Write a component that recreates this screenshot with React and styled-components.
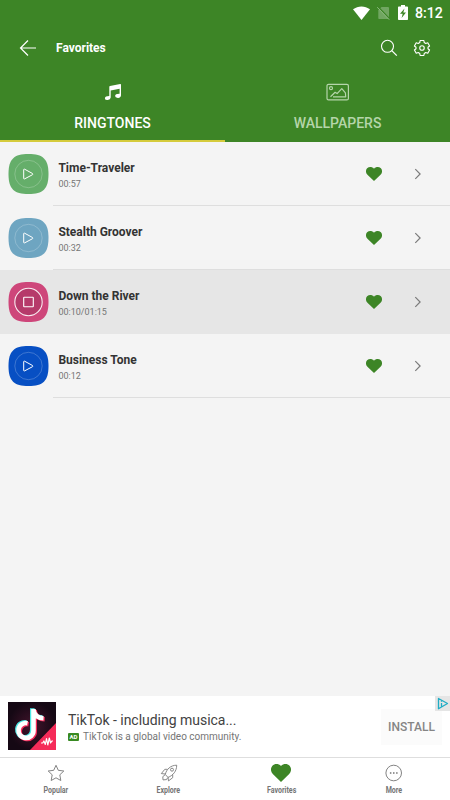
import React, {useState} from 'react'
import styled, { createGlobalStyle } from 'styled-components'


const GlobalStyle = createGlobalStyle`
  * {
    box-sizing: border-box;
  }

  body {
    margin: 0;
    background: #f4f4f4;
    font-family: Roboto, "Liberation Sans", sans-serif;
  }

  svg {
    display: block;
    flex: none;
  }

  button {
    border: 0;
    padding: 0;
    background: none;
    font: inherit;
    color: inherit;
  }
`

const Screen = styled.div`
  display: flex;
  flex-direction: column;
  width: 450px;
  height: 800px;
  overflow: hidden;
  background: #f4f4f4;
`

const Header = styled.header`
  flex: none;
  height: 142px;
  background: #3d8526;
  color: #fff;
`

const StatusBar = styled.div`
  display: flex;
  align-items: center;
  justify-content: flex-end;
  height: 25px;
  padding-right: 8px;

  .sim {
    margin-left: 7px;
  }

  .battery {
    margin-left: 8px;
  }
`

const Clock = styled.span`
  width: 27px;
  margin-left: 7px;
  padding-top: 1px;
  font-size: 14.2px;
  font-weight: 500;
  line-height: 25px;
  white-space: nowrap;
`

const AppBar = styled.div`
  display: flex;
  align-items: center;
  height: 46px;
  padding: 0 19px;
`

const Title = styled.h1`
  flex: 1;
  margin: 0 0 0 19px;
  font-size: 12px;
  font-weight: 700;
  line-height: 16px;
`

const Actions = styled.div`
  display: flex;
  gap: 15px;
`

const Tabs = styled.div`
  display: flex;
  height: 71px;
`

const Tab = styled.button`
  display: flex;
  flex: 1;
  flex-direction: column;
  align-items: center;
  height: 71px;
  padding-top: 11px;
  border-bottom: ${({$active}) => $active ? '2px solid #d5cb3c' : '0'};
  color: ${({$active}) => $active ? '#fff' : '#b5d5aa'};
`

const TabLabel = styled.span`
  margin-top: 12px;
  font-size: 14px;
  font-weight: 500;
  line-height: 18px;
`

const List = styled.main`
  flex: 1;
`

const Row = styled.div`
  display: flex;
  align-items: center;
  height: 64px;
  padding-left: 8px;
  background: ${({$playing}) => $playing ? '#e6e6e6' : 'linear-gradient(#dedede, #dedede) 53px 63px / 397px 1px no-repeat'};
`

const Info = styled.div`
  flex: 1;
  margin-left: 9.4px;
  padding-top: 3px;
`

const Name = styled.div`
  color: #333;
  font-size: 12px;
  font-weight: 700;
  line-height: 16px;
`

const Time = styled.div`
  margin-top: 1px;
  color: #757575;
  font-size: 9px;
  line-height: 14px;
`

const Like = styled.button`
  margin-right: 32px;
`

const Open = styled.button`
  margin-right: 28px;
`

const Ad = styled.aside`
  display: flex;
  position: relative;
  flex: none;
  height: 61px;
  padding: 6px 8px;
  background: #fff;
`

const AdText = styled.div`
  flex: 1;
  margin-left: 12px;
  padding-top: 9px;
`

const AdTitle = styled.div`
  color: #424242;
  font-size: 14px;
  line-height: 19px;
  letter-spacing: -0.02px;
  white-space: nowrap;
`

const AdLine = styled.div`
  display: flex;
  align-items: center;
  gap: 4px;
  color: #757575;
  font-size: 10px;
  line-height: 14px;
  white-space: nowrap;
`

const AdBadge = styled.span`
  width: 11px;
  height: 8px;
  border-radius: 1px;
  background: #388a22;
  color: #fff;
  font-size: 6px;
  font-weight: 700;
  line-height: 8px;
  text-align: center;
`

const Install = styled.button`
  width: 61px;
  height: 36px;
  margin-top: 7px;
  background: #fbfbfb;
  color: #858585;
  font-size: 12px;
  font-weight: 500;
`

const AdChoices = styled.div`
  position: absolute;
  top: 0;
  right: 0;
  width: 15px;
  height: 15px;
  background: #e5e5e5;
`

const BottomNav = styled.nav`
  display: flex;
  flex: none;
  height: 43px;
  border-top: 1px solid #dedede;
  background: #fff;
`

const NavItem = styled.button`
  display: flex;
  flex: 1;
  flex-direction: column;
  align-items: center;
  padding-top: 6px;
  color: #757575;
`

const NavLabel = styled.span`
  margin-top: 3px;
  font-size: 8.5px;
  font-weight: 700;
  line-height: 10px;
  transform: scaleX(0.83);
`


const Heart = ({width, height}) => (
  <svg width={width} height={height} viewBox="0 0 20 18" preserveAspectRatio="none" fill="#3d8526">
    <path d="M10 18 1.800 10C-.6 7.500-.6 3.800 1.400 1.700 3.700-.5 7.500-.5 10 2.100 12.500-.5 16.300-.5 18.600 1.700 20.600 3.800 20.600 7.500 18.200 10Z" />
  </svg>
)

const Cover = ({color, playing}) => (
  <svg width="41" height="40" viewBox="0 0 41 40" fill="none">
    <path d="M20.500 0C35 0 40.500 5 40.500 20S35 40 20.500 40 .5 35 .5 20 6 0 20.500 0Z" fill={color} />
    <circle cx="20.500" cy="20" r="13.700" fill={playing ? '#b63a6a' : 'none'} stroke="#fff" strokeOpacity={playing ? 0.9 : 0.28} strokeWidth={playing ? 1.1 : 0.8} />
    {playing
      ? <rect x="15.700" y="15.200" width="9.600" height="9.600" rx=".5" stroke="#fff" strokeWidth="1.100" />
      : <path d="M15.700 15.600v8.800q0 .9.900.5l7.900-4.200q.9-.6 0-1.200l-7.900-4.300q-.9-.4-.9.400Z" stroke="#fff" strokeWidth="1" />}
  </svg>
)

const WifiIcon = () => (
  <svg width="17" height="14" viewBox="0 0 18 14" preserveAspectRatio="none" fill="#fff">
    <path d="M0 3.300C5.200-.6 12.800-.6 18 3.300L9 14Z" />
  </svg>
)

const NoSimIcon = () => (
  <svg className="sim" width="13" height="14" viewBox="0 0 13 14">
    <path d="M4.500 1H11q1 0 1 1v10.500q0 .5-.5.5H2q-.7 0-.7-.7V4.200Z" fill="#71a661" />
    <path d="m.8.500 12 12.500" stroke="#3d8526" strokeWidth="1.200" />
    <path d="m.2 1.200 12 12.500" stroke="#8dba80" strokeWidth="1" />
  </svg>
)

const BatteryIcon = () => (
  <svg className="battery" width="10" height="15" viewBox="0 0 10 15">
    <path d="M3 0h4v1.500h2.200q.8 0 .8.800v11.900q0 .8-.8.800H.8q-.8 0-.8-.8V2.300q0-.8.8-.8H3Z" fill="#fff" />
    <path d="M6.500 3.500 2 8.700h2.700L3.600 13 8 7.600H5.300Z" fill="#3d8526" />
  </svg>
)

const BackIcon = () => (
  <svg width="18" height="17" viewBox="0 0 18 17" fill="none" stroke="#fff" strokeWidth="1.200">
    <path d="M17 8H1.500M9 .5 1.500 8 9 15.500" />
  </svg>
)

const SearchIcon = () => (
  <svg width="18" height="18" viewBox="0 0 18 18" fill="none" stroke="#fff" strokeWidth="1.100">
    <circle cx="7.500" cy="7.300" r="6" />
    <path d="m11.800 11.600 5 5" strokeWidth="1.300" />
  </svg>
)

const GearIcon = () => (
  <svg width="18" height="18" viewBox="0 0 24 24" fill="none" stroke="#fff" strokeWidth="1.500" strokeLinejoin="round">
    <path d="m9.500 2-.5 2.800-2 1.200-2.700-1L1.900 9.300 4 11v2l-2.100 1.700L4.300 19l2.700-1 2 1.200.5 2.800h5l.5-2.800 2-1.200 2.700 1 2.400-4.300L20 13v-2l2.100-1.700L19.700 5 17 6l-2-1.200-.5-2.800Z" />
    <circle cx="12" cy="12" r="3" />
  </svg>
)

const MusicIcon = () => (
  <svg width="18" height="20" viewBox="0 0 18 20" fill="#fff">
    <path d="M5.300 5Q5.300 4.300 6 4.100L16.200 2q.8-.1.800.7v10.500q0 2.300-2.900 2.700-3 .1-3-1.800.1-2.400 4.500-2.300V6.700L6.700 8.600v6.900q-.2 2.400-3 2.600-2.800.1-2.800-1.700.1-2.300 4.400-2.300Z" />
  </svg>
)

const PictureIcon = () => (
  <svg width="24" height="20" viewBox="0 0 24 20" fill="none" stroke="currentColor" strokeWidth="1.200" strokeLinejoin="round">
    <rect x="1" y="2.300" width="21.400" height="15.600" rx="1.500" />
    <circle cx="5" cy="6.200" r="1.500" />
    <path d="m4.500 14.800 4.600-4.500 2 1.300 4.700-5 3.600 4.200.3 4H7" />
  </svg>
)

const ChevronIcon = () => (
  <svg width="8" height="12" viewBox="0 0 8 12" fill="none" stroke="#7a7a7a" strokeWidth="1.200">
    <path d="m1.300 1.200 4.800 4.800-4.800 4.800" />
  </svg>
)

const TikTokIcon = () => (
  <svg width="48" height="48" viewBox="0 0 48 48" fill="none">
    <defs>
      <radialGradient id="glow">
        <stop offset="0" stopColor="#43142c" />
        <stop offset="1" stopColor="#150814" />
      </radialGradient>
      <path id="note" d="M25.500 7v21.500a7.500 7.500 0 1 1-6-7.300M25.500 8c.7 5 4.500 8 10 8.300" />
    </defs>
    <path d="M0 0h48v48H0Z" fill="url(#glow)" />
    <path d="M48 21v27H22Z" fill="#f52b59" />
    <g strokeWidth="4.600">
      <use href="#note" x="-1.200" y="-.7" stroke="#4de8e5" />
      <use href="#note" x="1.200" y="1" stroke="#f52b59" />
      <use href="#note" stroke="#fff" />
    </g>
    <path d="M33 41h1.700l1.200-2 1.400 3.500 1.200-6 1.300 6.500 1.500-7 1.300 5 1.200-2H45" stroke="#fff" strokeWidth="1.200" strokeLinejoin="round" />
  </svg>
)

const StarIcon = () => (
  <svg width="18" height="18" viewBox="0 0 18 18" fill="none" stroke="currentColor" strokeWidth=".9" strokeLinejoin="round">
    <path d="m9 1.300 2.300 5 5.500.7-4 3.800 1 5.700L9 13.800l-4.800 2.700 1-5.700-4-3.800 5.500-.7Z" />
  </svg>
)

const RocketIcon = () => (
  <svg width="18" height="18" viewBox="0 0 18 18" fill="none" stroke="currentColor" strokeWidth=".85" strokeLinejoin="round">
    <path d="M5.300 10.500C6.300 5.500 10.500 1.200 16.700 1.200c0 6-3.600 10.200-8.700 12.200Z" />
    <circle cx="12" cy="5.700" r="1.500" />
    <path d="M7.500 5.300H4.800L1.300 9.600l4.200.4M12.700 10.500v3.200l-4.200 3.200-.5-3.500M5 10.900l-2.200 1.700.2 3.300 3.500-.3 1.200-2" />
  </svg>
)

const MoreIcon = () => (
  <svg width="18" height="18" viewBox="0 0 18 18" fill="none" stroke="currentColor" strokeWidth=".9">
    <circle cx="8.700" cy="9" r="7.800" />
    <path d="M4.900 9h1.500m1.600 0h1.500m1.600 0h1.500" strokeWidth="1.400" />
  </svg>
)


const ringtones = [
  { name: 'Time-Traveler', time: '00:57', color: '#65ae6a' },
  { name: 'Stealth Groover', time: '00:32', color: '#6ea5c1' },
  { name: 'Down the River', time: '00:10/01:15', color: '#ce467a', playing: true },
  { name: 'Business Tone', time: '00:12', color: '#074fc3' },
]

const Ringtone = ({name, time, color, playing}) => {
  return (
    <Row $playing={playing}>
      <Cover color={color} playing={playing} />
      <Info>
        <Name>{name}</Name>
        <Time>{time}</Time>
      </Info>
      <Like><Heart width={16} height={14} /></Like>
      <Open><ChevronIcon /></Open>
    </Row>
  )
}


const App = () => {
  const [tab, setTab] = useState('ringtones')

  return (
    <>
      <GlobalStyle />
      <Screen>
        <Header>
          <StatusBar>
            <WifiIcon />
            <NoSimIcon />
            <BatteryIcon />
            <Clock>8:12</Clock>
          </StatusBar>
          <AppBar>
            <BackIcon />
            <Title>Favorites</Title>
            <Actions>
              <SearchIcon />
              <GearIcon />
            </Actions>
          </AppBar>
          <Tabs>
            <Tab $active={tab === 'ringtones'} onClick={() => setTab('ringtones')}>
              <MusicIcon />
              <TabLabel>RINGTONES</TabLabel>
            </Tab>
            <Tab $active={tab === 'wallpapers'} onClick={() => setTab('wallpapers')}>
              <PictureIcon />
              <TabLabel>WALLPAPERS</TabLabel>
            </Tab>
          </Tabs>
        </Header>

        <List>
          {ringtones.map((ringtone) => <Ringtone key={ringtone.name} {...ringtone} />)}
        </List>

        <Ad>
          <TikTokIcon />
          <AdText>
            <AdTitle>TikTok - including musica...</AdTitle>
            <AdLine>
              <AdBadge>AD</AdBadge>
              TikTok is a global video community.
            </AdLine>
          </AdText>
          <Install>INSTALL</Install>
          <AdChoices>
            <svg width="15" height="15" viewBox="0 0 15 15" fill="none" stroke="#20adc5" strokeWidth="1.300" strokeLinejoin="round">
              <path d="m3.500 2.500 9 5-9 5.200ZM6.500 7v3.500M6.500 4.700v1" />
            </svg>
          </AdChoices>
        </Ad>

        <BottomNav>
          <NavItem><StarIcon /><NavLabel>Popular</NavLabel></NavItem>
          <NavItem><RocketIcon /><NavLabel>Explore</NavLabel></NavItem>
          <NavItem><Heart width={20} height={18} /><NavLabel>Favorites</NavLabel></NavItem>
          <NavItem><MoreIcon /><NavLabel>More</NavLabel></NavItem>
        </BottomNav>
      </Screen>
    </>
  )
}

export default App
